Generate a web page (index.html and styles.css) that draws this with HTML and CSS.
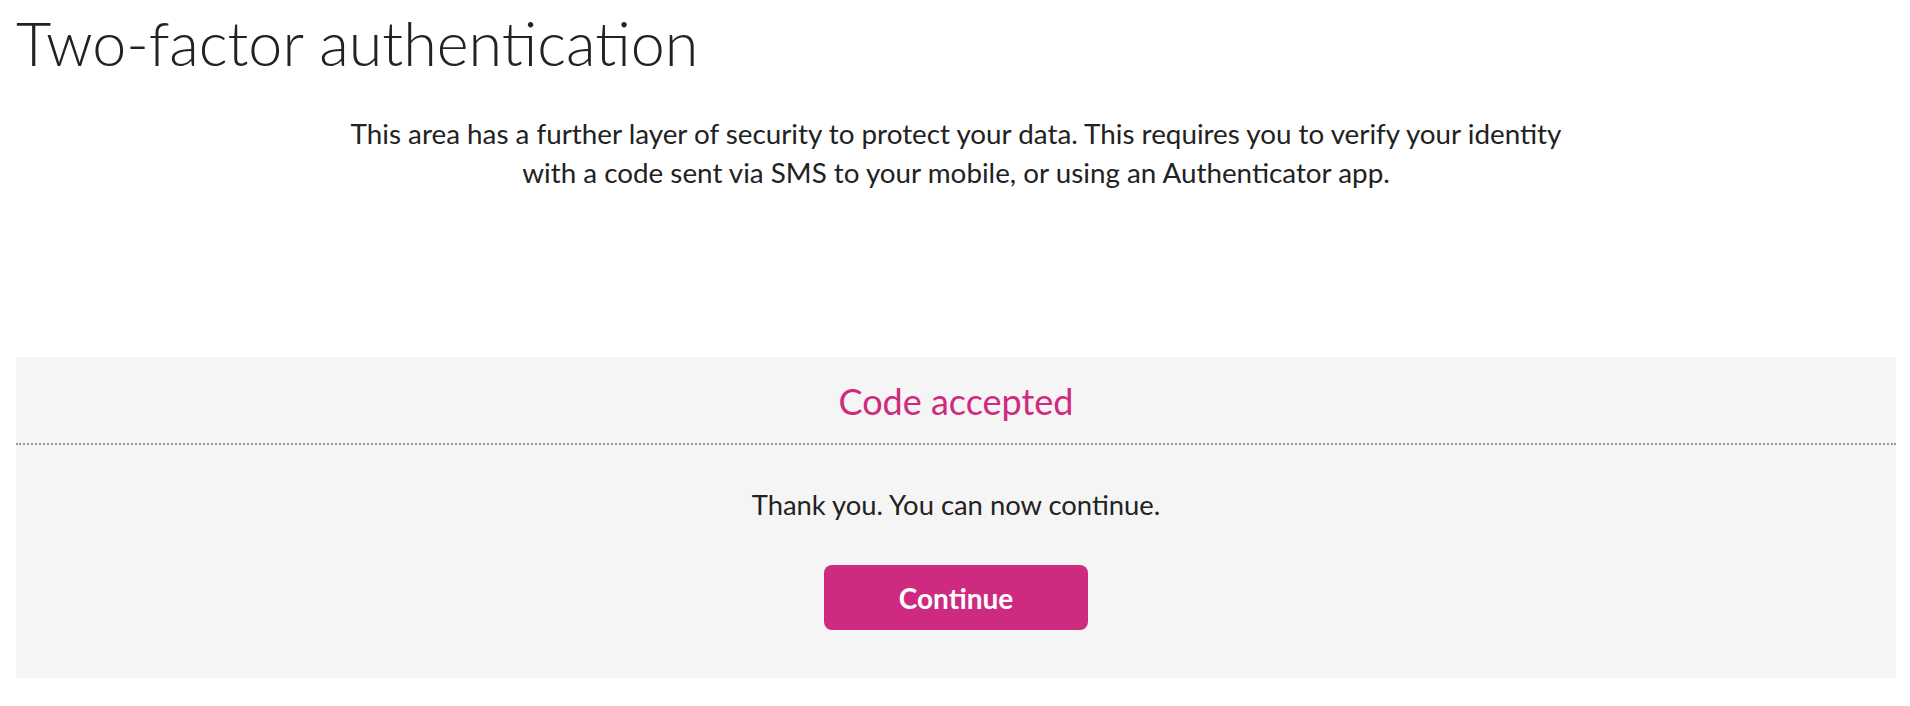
FILE: index.html
```html
<!DOCTYPE html>
<html lang="en">
<head>
<meta charset="utf-8">
<title>Two-factor authentication</title>
<link rel="stylesheet" href="styles.css">
</head>
<body>
<main class="page">
  <h1 class="title">Two-factor authentication</h1>
  <p class="intro">This area has a further layer of security to protect your data. This requires you to verify your identity with a code sent via SMS to your mobile, or using an Authenticator app.</p>
  <section class="panel">
    <div class="panel-head">
      <h2 class="panel-title">Code accepted</h2>
    </div>
    <div class="panel-body">
      <p class="panel-text">Thank you. You can now continue.</p>
      <button class="btn" type="button">Continue</button>
    </div>
  </section>
</main>
</body>
</html>
```
FILE: styles.css
```css
html, body {
  margin: 0;
  padding: 0;
  background: #fff;
}
body {
  font-family: Lato, "Open Sans", "Liberation Sans", sans-serif;
  color: #222;
}
.page {
  padding: 0 14px 0 16px;
}
.title {
  margin: 0;
  padding-top: 6px;
  font-size: 61px;
  font-weight: 300;
  line-height: 1.2;
  color: #222;
}
.intro {
  max-width: 1240px;
  margin: 35px auto 0;
  font-size: 27.8px;
  line-height: 39px;
  text-align: center;
}
.panel {
  margin-top: 165px;
  background: #f5f5f5;
}
.panel-head {
  height: 86px;
  border-bottom: 2px dotted #999;
  display: flex;
  align-items: center;
  justify-content: center;
}
.panel-title {
  margin: 0;
  padding-top: 2px;
  font-size: 36px;
  font-weight: 400;
  color: #d02a7e;
}
.panel-body {
  display: flex;
  flex-direction: column;
  align-items: center;
  padding: 40px 0 48px;
}
.panel-text {
  margin: 0;
  font-size: 27.4px;
  line-height: 39px;
}
.btn {
  margin-top: 41px;
  width: 264px;
  height: 65px;
  border: 0;
  border-radius: 8px;
  background: #ce2b80;
  color: #fff;
  font-family: Lato, "Open Sans", "Liberation Sans", sans-serif;
  font-size: 28px;
  font-weight: 700;
  cursor: pointer;
}
```
